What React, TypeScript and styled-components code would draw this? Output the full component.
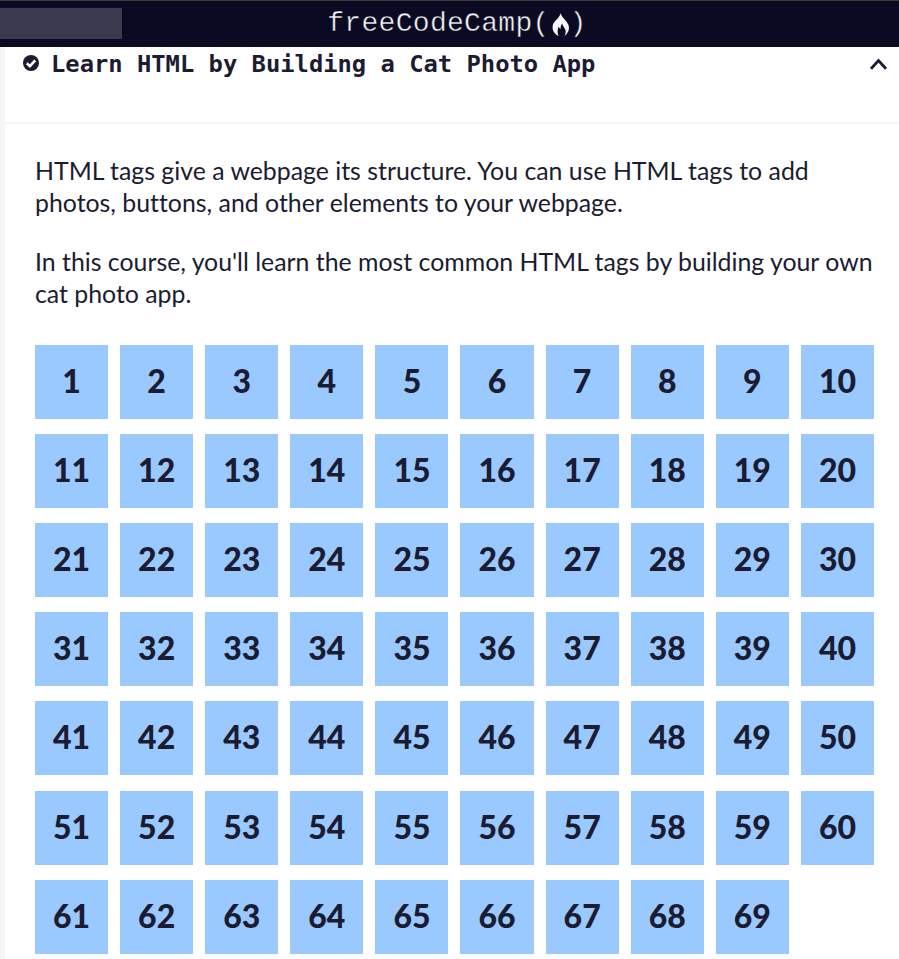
import styled, { createGlobalStyle } from 'styled-components'

const GlobalStyle = createGlobalStyle`
  html, body {
    margin: 0;
    padding: 0;
    height: 100%;
    overflow: hidden;
    background: #f5f6f7;
  }
`

const Page = styled.div`
  height: 959px;
  overflow: hidden;
  font-family: Lato, sans-serif;
  font-variant-ligatures: none;
  color: #1b1b32;
`

const NavBar = styled.header`
  box-sizing: border-box;
  position: relative;
  height: 47px;
  background: #0a0a23;
  border-top: 1px solid #3b3b37;
  display: flex;
  align-items: center;
  justify-content: center;
`

const SearchBox = styled.div`
  position: absolute;
  left: 0;
  top: 7px;
  width: 122px;
  height: 31px;
  background: #3b3b4f;
`

const Logo = styled.div`
  display: flex;
  align-items: center;
  color: #f5f6f7;
  font-family: 'Liberation Mono', monospace;
  font-size: 28px;
  letter-spacing: 0.3px;
  line-height: 46px;
  margin-left: 15px;
  -webkit-text-stroke: 0.45px #0a0a23;
`

const Flame = styled.svg`
  width: 18px;
  height: 23px;
  margin-left: 2px;
`

const Main = styled.main`
  margin-left: 5px;
  background: #fff;
  height: 912px;
`

const BlockHeader = styled.div`
  box-sizing: border-box;
  height: 77px;
  border-bottom: 2px solid #f5f6f7;
  display: flex;
  align-items: flex-start;
  padding: 2px 12px 0 18px;
`

const Title = styled.h3`
  flex: 1;
  margin: 0 0 0 12px;
  font-family: 'DejaVu Sans Mono', monospace;
  font-size: 23.8px;
  line-height: 30px;
  font-weight: 700;
`

const CheckIcon = styled.svg`
  width: 16px;
  height: 16px;
  margin-top: 6px;
`

const Chevron = styled.svg`
  width: 17px;
  height: 12px;
  margin-top: 9px;
`

const Content = styled.section`
  padding: 30px 25px 0 30px;
`

const Paragraph = styled.p`
  margin: 0 0 27px;
  font-size: 24.85px;
  line-height: 32px;
`

const StepGrid = styled.div`
  margin-top: 35.8px;
  display: grid;
  grid-template-columns: repeat(10, 1fr);
  grid-auto-rows: 74px;
  column-gap: 12px;
  row-gap: 15.15px;
`

const Step = styled.a`
  box-sizing: border-box;
  display: flex;
  align-items: center;
  justify-content: center;
  padding-bottom: 3px;
  background: #99c9ff;
  font-size: 32px;
  font-weight: 900;
`

export default function App() {
  const steps = Array.from({ length: 69 }, (_, i) => i + 1)

  return (
    <Page>
      <GlobalStyle />
      <NavBar>
        <SearchBox />
        <Logo>
          freeCodeCamp(
          <Flame viewBox="0 0 18 23">
            <path
              fill="#f5f6f7"
              d="M8.5 0C9.5 4 14 7 16.3 11.5C18 15.5 16.5 20 12.5 23C14 20 14.2 17.5 12.5 15C11.5 13.5 10.5 12.5 10.3 10.5C9 12.3 8.3 14 8.7 16C7.6 15.5 7 14.6 6.8 13.5C5.2 16.5 5.3 20 6.6 23C2.6 21 0.2 17.5 0.6 13.5C1 9.5 4 7.5 6 5C7.4 3.2 8.3 1.8 8.5 0Z"
            />
          </Flame>
          )
        </Logo>
      </NavBar>
      <Main>
        <BlockHeader>
          <CheckIcon viewBox="0 0 16 16">
            <circle cx="8" cy="8" r="8" fill="#1b1b32" />
            <path d="M3.8 8.2L6.9 11.2L12.2 5.4" fill="none" stroke="#fff" strokeWidth="2.6" />
          </CheckIcon>
          <Title>Learn HTML by Building a Cat Photo App</Title>
          <Chevron viewBox="0 0 17 12">
            <path d="M1 10.8L8.5 2.6L16 10.8" fill="none" stroke="#1b1b32" strokeWidth="2.8" />
          </Chevron>
        </BlockHeader>
        <Content>
          <Paragraph>
            HTML tags give a webpage its structure. You can use HTML tags to add photos, buttons, and other
            elements to your webpage.
          </Paragraph>
          <Paragraph>
            In this course, you'll learn the most common HTML tags by building your own cat photo app.
          </Paragraph>
          <StepGrid>
            {steps.map(n => (
              <Step key={n}>{n}</Step>
            ))}
          </StepGrid>
        </Content>
      </Main>
    </Page>
  )
}
